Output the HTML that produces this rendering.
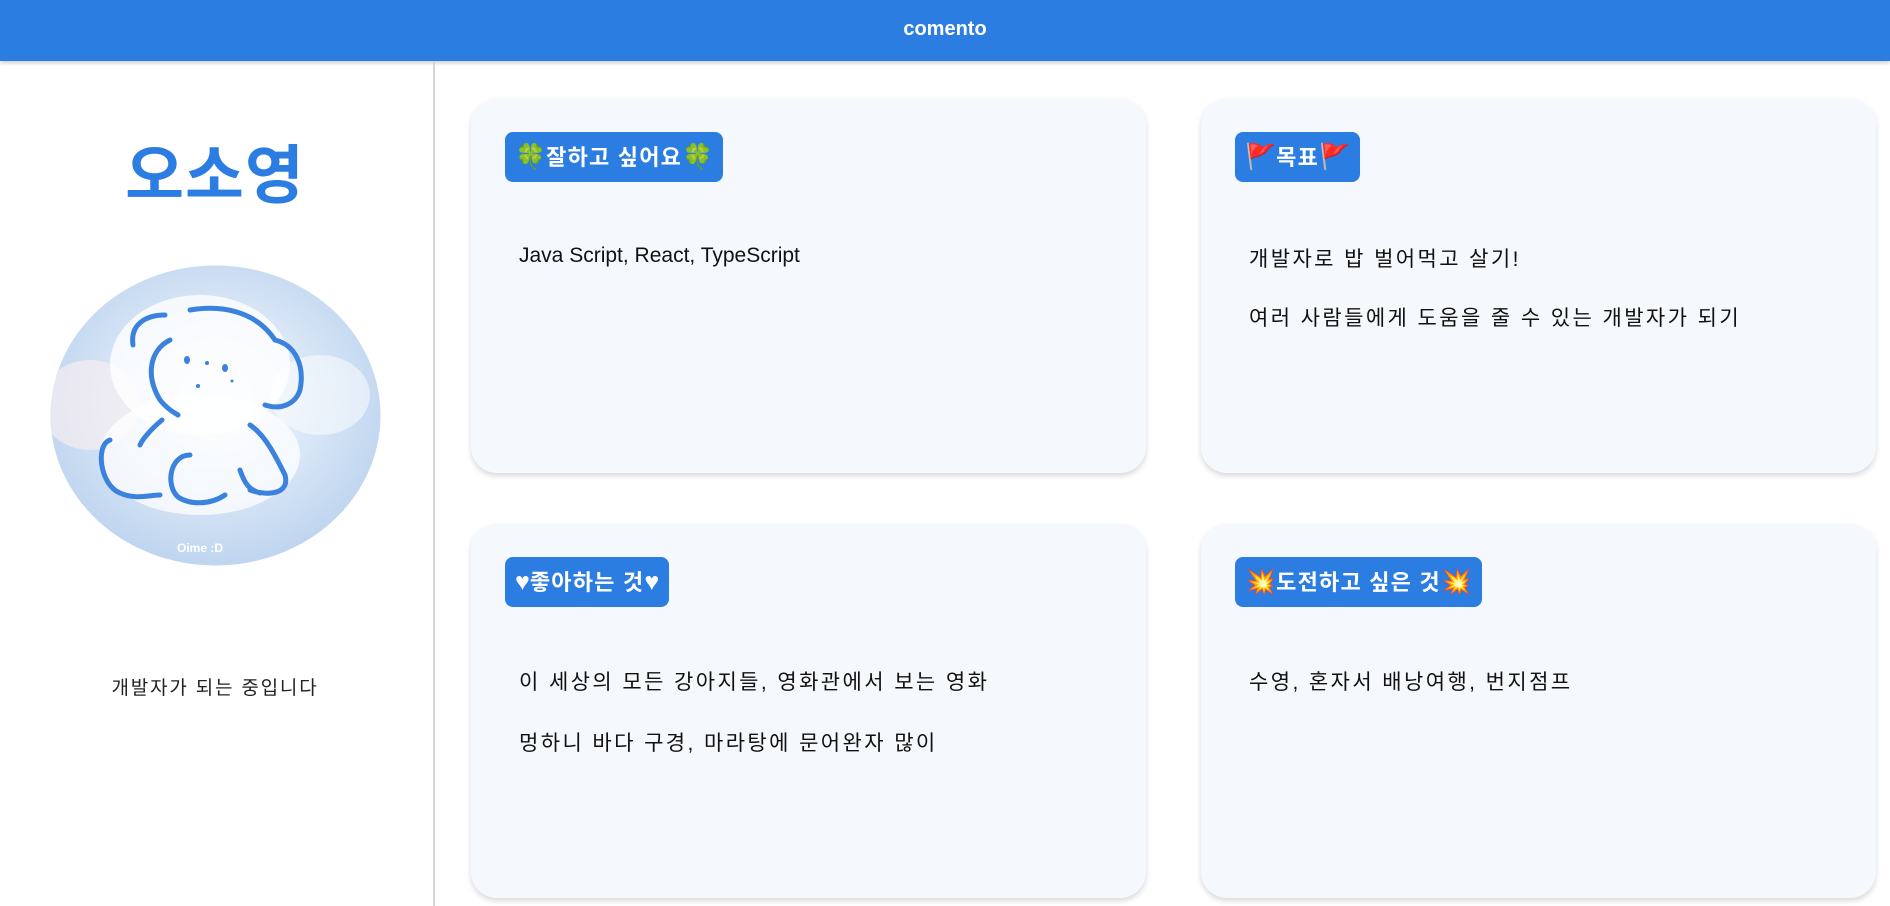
<!DOCTYPE html>
<html><head><meta charset="utf-8"><style>
*{margin:0;padding:0;box-sizing:border-box}
body{width:1890px;height:905px;overflow:hidden;background:#fff;font-family:"Liberation Sans","Noto Sans CJK KR",sans-serif;position:relative}
.hdr{position:absolute;left:0;top:0;width:1890px;height:61px;background:#2b7de1;box-shadow:0 2px 4px rgba(0,0,0,.2);color:#fff;font-weight:bold;font-size:20px;text-align:center;line-height:58px}
.div{position:absolute;left:433px;top:61px;width:2px;height:845px;background:#d5d5d5}
.name{position:absolute;left:0;width:430px;top:136px;text-align:center;font-size:64px;font-weight:bold;color:#2b7de1;line-height:80px;letter-spacing:1px}
.cap{position:absolute;left:0;width:430px;top:673px;text-align:center;font-size:19px;color:#222;letter-spacing:1.8px}
.card{position:absolute;width:675px;height:374px;background:#f5f8fd;border-radius:26px;box-shadow:0 3px 6px rgba(0,0,0,.15)}
.badge{position:absolute;left:34px;top:33px;height:50px;background:#2b7de1;border-radius:8px;color:#fff;font-weight:bold;font-size:22px;line-height:50px;padding:0 10px;white-space:nowrap;letter-spacing:1.2px}
.badge span{font-size:25px;letter-spacing:0}
.t{position:absolute;left:48px;font-size:21px;color:#111;white-space:nowrap;letter-spacing:2.4px}
.t.l{letter-spacing:0;font-size:21px}
</style></head><body>
<div class="hdr">comento</div>
<div class="div"></div>
<div class="name">오소영</div>
<svg style="position:absolute;left:50px;top:265px" width="331" height="301" viewBox="0 0 331 301">
<defs>
<radialGradient id="g" cx="50%" cy="45%" r="60%"><stop offset="0" stop-color="#f4f8fd"/><stop offset=".45" stop-color="#dde9f7"/><stop offset="1" stop-color="#b9d1ee"/></radialGradient>
<clipPath id="c"><ellipse cx="165.5" cy="150.5" rx="165" ry="150"/></clipPath>
</defs>
<ellipse cx="165.5" cy="150.5" rx="165" ry="150" fill="url(#g)"/>
<g clip-path="url(#c)">
<ellipse cx="40" cy="140" rx="50" ry="45" fill="#f6eef2" opacity=".7"/>
<ellipse cx="150" cy="100" rx="90" ry="70" fill="#fff" opacity=".8"/>
<ellipse cx="150" cy="190" rx="100" ry="60" fill="#fff" opacity=".75"/>
<ellipse cx="270" cy="130" rx="50" ry="40" fill="#fff" opacity=".5"/>
</g>
<g fill="none" stroke="#3a82de" stroke-width="5" stroke-linecap="round">
<path d="M115 50 C95 50 80 60 83 80 M140 45 C170 40 205 45 225 75 C245 80 255 100 250 125 C245 140 230 145 215 140"/>
<path d="M120 75 C100 85 95 110 110 135 C118 145 125 148 128 150"/>
<path d="M112 155 C100 165 92 175 90 180 M60 175 C45 180 50 220 70 228 C85 235 100 230 110 230"/>
<path d="M140 190 C120 190 115 220 128 232 C140 240 160 240 175 230"/>
<path d="M200 160 C215 170 225 190 235 210 C240 228 220 232 200 225 M190 205 C195 220 200 225 210 228"/>
</g>
<g fill="#3a82de"><ellipse cx="137" cy="95" rx="3" ry="4"/><ellipse cx="175" cy="103" rx="3" ry="4"/><circle cx="157" cy="98" r="2"/><circle cx="148" cy="121" r="2"/><circle cx="182" cy="116" r="1.5"/></g>
<text x="127" y="287" font-family="Liberation Sans" font-size="12" fill="#fff" font-weight="bold">Oime :D</text>
</svg>
<div class="cap">개발자가 되는 중입니다</div>

<div class="card" style="left:471px;top:99px">
<div class="badge"><span>🍀</span>잘하고 싶어요<span>🍀</span></div>
<div class="t l" style="top:145px">Java Script, React, TypeScript</div>
</div>
<div class="card" style="left:1201px;top:99px">
<div class="badge"><span>🚩</span>목표<span>🚩</span></div>
<div class="t" style="top:144px">개발자로 밥 벌어먹고 살기!</div>
<div class="t" style="top:203px">여러 사람들에게 도움을 줄 수 있는 개발자가 되기</div>
</div>
<div class="card" style="left:471px;top:524px">
<div class="badge"><span>♥</span>좋아하는 것<span>♥</span></div>
<div class="t" style="top:142px">이 세상의 모든 강아지들, 영화관에서 보는 영화</div>
<div class="t" style="top:203px">멍하니 바다 구경, 마라탕에 문어완자 많이</div>
</div>
<div class="card" style="left:1201px;top:524px">
<div class="badge"><span>💥</span>도전하고 싶은 것<span>💥</span></div>
<div class="t" style="top:142px">수영, 혼자서 배낭여행, 번지점프</div>
</div>
</body></html>
